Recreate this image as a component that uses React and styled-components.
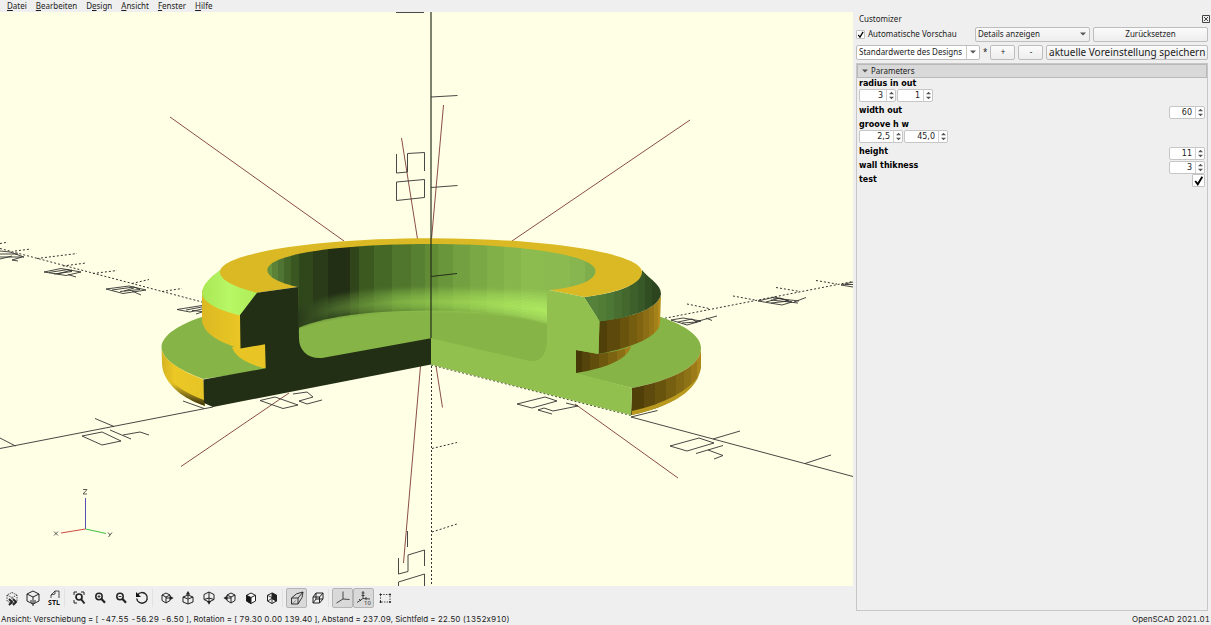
import React, { useState } from "react";
import styled, { createGlobalStyle } from "styled-components";

const GlobalStyle = createGlobalStyle`
  * {
    box-sizing: border-box;
  }
  body {
    margin: 0;
    background: #efefef;
    color: #1c1c1c;
    font-family: "Noto Sans", "DejaVu Sans", sans-serif;
    font-size: 8px;
    line-height: 10px;
  }
  button, input, select {
    font: inherit;
    color: inherit;
    margin: 0;
    padding: 0;
  }
`;
const Window = styled.div`
  display: flex;
  flex-direction: column;
  height: 100vh;
  overflow: hidden;
`;
const MenuBar = styled.nav`
  display: flex;
  align-items: center;
  gap: 9px;
  height: 12px;
  padding: 0 7px;
`;
const MenuItem = styled.button`
  border: 0;
  background: none;
  line-height: 12px;
`;
const Workspace = styled.main`
  display: flex;
  flex: 1;
  min-height: 0;
`;
const Editor = styled.section`
  display: flex;
  flex: 1;
  min-width: 0;
  flex-direction: column;
`;
const Viewport = styled.svg`
  flex: 1;
  min-height: 0;
  width: 100%;
  background: #ffffe5;
`;
const Toolbar = styled.div`
  display: flex;
  align-items: center;
  height: 26px;
  padding: 0 1px 2px;
`;
const ToolButton = styled.button`
  display: flex;
  align-items: center;
  justify-content: center;
  width: 21px;
  height: 20px;
  border: 1px solid ${(props) => (props.$checked ? "#b4b4b4" : "transparent")};
  border-radius: 2px;
  background: ${(props) => (props.$checked ? "#d9d9d9" : "transparent")};
`;
const Separator = styled.span`
  width: 4px;
  height: 18px;
  border-left: 1px solid #e2e2e2;
`;
const Dock = styled.aside`
  display: flex;
  flex: 0 0 358px;
  flex-direction: column;
  padding: 0 3px 1px;
`;
const DockTitle = styled.header`
  display: flex;
  align-items: center;
  justify-content: space-between;
  height: 13px;
  padding-left: 3px;
  margin-right: -3px;
`;
const CloseButton = styled.button`
  display: flex;
  width: 9px;
  height: 8px;
  border: 0;
  background: none;
`;
const Row = styled.div`
  display: flex;
  align-items: center;
  gap: 3px;
  height: 18px;
`;
const CheckLabel = styled.label`
  display: flex;
  flex: 1;
  align-items: center;
  gap: 3px;
  white-space: nowrap;
`;
const CheckWrap = styled.span`
  display: inline-grid;
  flex: none;
  width: ${(props) => props.$size}px;
  height: ${(props) => props.$size}px;
  > * {
    grid-area: 1 / 1;
    width: 100%;
    height: 100%;
  }
  svg {
    pointer-events: none;
  }
`;
const CheckInput = styled.input`
  appearance: none;
  border: 1px solid #c3c3c3;
  border-radius: 1px;
  background: #fff;
`;
const SelectWrap = styled.span`
  display: inline-grid;
  flex: none;
  align-items: center;
  width: ${(props) => props.$width}px;
  > * {
    grid-area: 1 / 1;
  }
`;
const Select = styled.select`
  appearance: none;
  width: 100%;
  height: 15px;
  padding-left: 2px;
  border: 1px solid #bdbdbd;
  border-radius: 2px;
  background: ${(props) => (props.$editable ? "#fff" : "linear-gradient(#f9f9f9, #ededed)")};
`;
const Arrow = styled.span`
  display: flex;
  align-items: center;
  justify-content: center;
  justify-self: end;
  width: 13px;
  height: 13px;
  margin-right: 1px;
  border-left: 1px solid ${(props) => (props.$split ? "#c9c9c9" : "transparent")};
  pointer-events: none;
`;
const PushButton = styled.button`
  flex: ${(props) => (props.$width ? "none" : 1)};
  width: ${(props) => (props.$width ? props.$width + "px" : "auto")};
  height: 15px;
  border: 1px solid #bdbdbd;
  border-radius: 2px;
  background: linear-gradient(#fbfbfb, #ededed);
  font-size: ${(props) => (props.$large ? 10 : 8)}px;
  line-height: 12px;
  white-space: nowrap;
`;
const ParamPane = styled.div`
  flex: 1;
  margin-top: 2px;
  border: 1px solid #c6c6c6;
`;
const GroupHeader = styled.button`
  display: flex;
  align-items: center;
  gap: 3px;
  width: 100%;
  height: 14px;
  padding-left: 4px;
  border: 1px solid #b9b9b9;
  background: #d9d9d9;
`;
const Params = styled.div`
  padding: 0 2px;
`;
const Param = styled.div`
  display: flex;
  flex-direction: ${(props) => (props.$vector ? "column" : "row")};
  justify-content: ${(props) => (props.$vector ? "flex-start" : "space-between")};
  height: ${(props) => (props.$vector ? 27 : 14)}px;
`;
const ParamName = styled.label`
  color: #000;
  font-family: "DejaVu Sans", sans-serif;
  font-weight: 700;
  line-height: 11px;
`;
const SpinRow = styled.div`
  display: flex;
  align-items: flex-end;
  gap: 1px;
`;
const SpinBox = styled.span`
  display: flex;
  width: ${(props) => props.$width}px;
  height: 13px;
  border: 1px solid #c6c6c6;
  border-radius: 2px;
  background: #fff;
`;
const SpinInput = styled.input`
  flex: 1;
  min-width: 0;
  padding-right: 3px;
  border: 0;
  background: none;
  font-family: "DejaVu Sans", sans-serif;
  text-align: right;
`;
const Stepper = styled.span`
  display: flex;
  align-items: center;
  justify-content: center;
  width: 9px;
  border-left: 1px solid #d2d2d2;
`;
const StatusBar = styled.footer`
  display: flex;
  align-items: center;
  justify-content: space-between;
  height: 13px;
  padding: 0 1px;
  font-family: Inter, "DejaVu Sans", sans-serif;
  font-feature-settings: "calt" 0, "tnum" 1;
`;

const cube = "M8 2.5 L13 5 V11 L8 13.7 L3 11 V5 Z M3 5 L8 7.6 L13 5 M8 7.6 V13.7";

const icons = {
  Vorschau: (
    <>
      <path d={cube} strokeDasharray="1.5 1" strokeWidth="0.8" />
      <path d="M5 9 L8 12 L5 15 M9 9 L12 12 L9 15" strokeWidth="1.9" />
    </>
  ),
  Rendern: (
    <>
      <path d="M8 1 L14 4 V11 L8 14 L2 11 V4 Z M2 4 L8 7 L14 4" />
      <path d="M8 7 V10 M5 11 H11 M6 13 H10 M7 15 H9" />
    </>
  ),
  STL: (
    <>
      <path d="M5 8 V5 L9 1 H13 V8 M5 5 L9 4 V1" strokeWidth="0.8" />
      <text x="8" y="15" textAnchor="middle" fontSize="7" fontWeight="700" fill="#111" stroke="none">STL</text>
    </>
  ),
  "Alles anzeigen": (
    <>
      <path d="M3 5 V2 H6 M10 2 H13 V5 M3 10 V13 H6" />
      <circle cx="8" cy="7" r="3" strokeWidth="1.7" />
      <path d="M10 9 L13.5 13.5" strokeWidth="2" />
    </>
  ),
  Vergrößern: (
    <>
      <circle cx="7" cy="6.5" r="3.2" strokeWidth="1.5" />
      <path d="M5.5 6.5 H8.5 M7 5 V8" strokeWidth="0.8" />
      <path d="M9.5 9 L13 12.7" strokeWidth="2.2" />
    </>
  ),
  Verkleinern: (
    <>
      <circle cx="7" cy="6.5" r="3.2" strokeWidth="1.5" />
      <path d="M5.5 6.5 H8.5" strokeWidth="0.9" />
      <path d="M9.5 9 L13 12.7" strokeWidth="2.2" />
    </>
  ),
  Zurücksetzen: (
    <>
      <path d="M3.5 5 A5.3 5.3 0 1 1 2.7 8.5" strokeWidth="1.4" />
      <path d="M2 2 V7 H7 Z" fill="#111" stroke="none" />
    </>
  ),
  Rechts: (
    <>
      <path d="M7 3 L11 5 V10.5 L7 13 L3 10.5 V5 Z M3 5 L7 7 L11 5 M7 7 V13 M7 8 H12" />
      <path d="M11 5.7 L14.5 8 L11 10.3 Z" fill="#222" stroke="none" />
    </>
  ),
  Oben: (
    <>
      <path d="M8 5 L13 7 V12 L8 14 L3 12 V7 Z M3 7 L8 9 L13 7 M8 9 V14 M8 8 V3" />
      <path d="M5.8 4.5 L8 1 L10.2 4.5 Z" fill="#222" stroke="none" />
    </>
  ),
  Unten: (
    <>
      <path d="M8 2 L13 4.5 V9.5 L8 12 L3 9.5 V4.5 Z M8 2 V8 L3 9.5 M8 8 L13 9.5 M8 8 V13" />
      <path d="M5.8 11 L8 14.7 L10.2 11 Z" fill="#222" stroke="none" />
    </>
  ),
  Links: (
    <>
      <path d="M9 3 L13 5 V10.5 L9 13 L5 10.5 V5 Z M5 5 L9 7 L13 5 M9 7 V13 M3 8 H9" />
      <path d="M5 5.7 L1.5 8 L5 10.3 Z" fill="#222" stroke="none" />
    </>
  ),
  Vorne: (
    <>
      <path d="M8 3 L12.5 5.3 V11 L8 13.5 L3.5 11 V5.3 Z" fill="#fff" />
      <path d="M3.5 5.3 L8 7.5 V13.5 L3.5 11 Z" fill="#161616" />
      <path d="M8 7.5 L12.5 5.3" />
    </>
  ),
  Hinten: (
    <>
      <path d="M8 3 L12.5 5.3 V11 L8 13.5 L3.5 11 V5.3 Z" fill="#eee" />
      <path d="M8 3 L12.5 5.3 V11 L8 8.5 Z" fill="#222" />
      <path d="M3.5 5.3 L8 7.5 L12.5 5.3 M8 7.5 V13.5 M3.5 11 L8 8.5 L12.5 11" strokeWidth="0.8" />
    </>
  ),
  Perspektivisch: (
    <>
      <path d="M2.5 8 H9 V14 H2.5 Z M2.5 8 L7.5 3.8 L14 2 L9 8 M14 2 L13 7.5 L9 14" strokeWidth="0.9" />
      <path d="M2.5 14 L7 10.5" strokeWidth="0.4" />
    </>
  ),
  Orthogonal: <path d="M3 7 H9.5 V13 H3 Z M6 3 H13 V9 H6 Z M3 7 L6 3 M9.5 7 L13 3 M9.5 13 L13 9 M3 13 L6 9" />,
  Achsen: <path d="M8 1.5 V9 L14.5 9.5 M8 9 L1.5 13" strokeWidth="0.8" />,
  Skalenmarkierungen: (
    <>
      <path d="M7 1 V8.5 L14 9 M7 8.5 L1 12.5 M5.5 3 H8.5 M5.5 5.5 H8.5 M3 9 L5 11 M10 7 V10" strokeWidth="0.8" />
      <text x="11.5" y="15" textAnchor="middle" fontSize="6" fill="#333" stroke="none">10</text>
    </>
  ),
  Kanten: (
    <>
      <path d="M3.5 4.5 H13 V12 H3.5 Z" strokeDasharray="1.5 1.2" strokeWidth="0.8" />
      <path d="M2.5 4.5 H4.5 M3.5 3.5 V5.5 M12 4.5 H14 M13 3.5 V5.5 M2.5 12 H4.5 M3.5 11 V13 M12 12 H14 M13 11 V13" />
    </>
  ),
};

const toolGroups = [
  ["Vorschau", "Rendern", "STL"],
  ["Alles anzeigen", "Vergrößern", "Verkleinern", "Zurücksetzen"],
  ["Rechts", "Oben", "Unten", "Links", "Vorne", "Hinten"],
  ["Perspektivisch", "Orthogonal"],
  ["Achsen", "Skalenmarkierungen", "Kanten"],
];
const checkedTools = ["Perspektivisch", "Achsen", "Skalenmarkierungen"];

// [right edge, colour] of each facet
const boreFacets = [
  [272, "#68943f"], [278, "#5a8338"], [284, "#4f7433"], [291, "#436528"], [299, "#3a5722"],
  [313, "#30471c"], [328, "#293b18"], [350, "#222f15"], [359, "#30451a"], [374, "#3c5a1f"],
  [392, "#456827"], [411, "#4f762c"], [425, "#588032"], [438, "#628b36"], [453, "#6a963b"],
  [470, "#73a040"], [487, "#7aa844"], [504, "#81b048"], [521, "#87b74c"], [545, "#8cbc4f"],
  [570, "#8bbb50"], [585, "#87b651"], [600, "#7eae4c"],
];
const chamferFacets = [
  [598, "#55823b"], [606, "#517d37"], [614, "#4d7734"], [622, "#486f31"], [630, "#43682d"],
  [638, "#3d602a"], [645, "#385827"], [652, "#314e22"], [662, "#2c451e"],
];
const rimFacets = [
  [607, "#4f3f09"], [620, "#5c490b"], [629, "#6a530d"], [637, "#755d10"], [643, "#806412"],
  [649, "#8a6d14"], [654, "#967616"], [658, "#a58119"], [664, "#b58d1c"],
];
const neckFacets = [
  [582, "#473807"], [590, "#54430a"], [599, "#614d0c"], [608, "#6e580e"], [617, "#7b6311"],
  [625, "#8b6f15"], [634, "#a27e18"],
];
const flangeFacets = [
  [644, "#513f0a"], [655, "#5d4a0c"], [666, "#69540e"], [676, "#765f11"], [684, "#836913"],
  [691, "#8e7216"], [697, "#9c7b18"], [703, "#ad881b"],
];

function Facets({ from, facets, top, height, clip }) {
  return (
    <g clipPath={`url(#${clip})`}>
      {facets.map(([to, fill], i) => {
        const x = i ? facets[i - 1][0] : from;
        return <rect key={to} x={x} y={top} width={to - x + 0.5} height={height} fill={fill} />;
      })}
    </g>
  );
}

const filletSteps = Array.from({ length: 20 }, (_, i) => i / 19);

function Fillet() {
  return filletSteps.map((t) => {
    const left = 305 + 22 * t;
    const mid = 286 + 25 * t;
    const right = 290 + 33 * t;
    const strength = t < 0.65 ? (t / 0.65) * 0.4 : 0.4 - (t - 0.65) * 0.8;
    return (
      <path
        key={t}
        d={`M298 ${left} C330 ${mid + 4} 385 ${mid} 431 ${mid} C480 ${mid} 520 ${mid + 3} 549 ${right}`}
        stroke="url(#filletTone)"
        strokeWidth="4"
        opacity={strength}
        fill="none"
      />
    );
  });
}

function Model() {
  return (
    <g>
      <path d="M203 379 C177 369 162 359 161.500 347 C162 335 180 324 202 317 L661 317 C687 326 701 337 701 348 C701 366 673 380 632 388 L576 374 L431 340 L266 370 Z" fill="#86b447" />
      <path d="M161.500 347 C162 359 177 369 203.500 379.500 L205 406 C180 397 162 381 162 363 Z" fill="url(#flangeYellow)" />
      <path d="M165 373 C172 384 187 394 204 400 L205 406 C188 400 170 390 165 373 Z" fill="url(#underside)" />
      <Facets from={630} facets={flangeFacets} top={340} height={80} clip="flangeClip" />
      <path d="M632 411 C665 404 691 389 699 375 C692 394 668 407 632 415 Z" fill="#b99a1e" />
      <path d="M232 347 L266 343 V369 C248 364 235 357 232 347 Z" fill="#e8c524" />
      <path d="M202 290 V321 C204 333 216 341 241 349 V314 Z" fill="url(#rimYellow)" />
      <path d="M220 270 C211 277 202 284 202 294 C204 303 218 310 240 315.500 L258 292 Z" fill="url(#chamferLight)" />
      <Facets from={574} facets={neckFacets} top={340} height={40} clip="neckClip" />
      <Facets from={597} facets={rimFacets} top={290} height={70} clip="rimClip" />
      <Facets from={582} facets={chamferFacets} top={268} height={58} clip="chamferClip" />
      <path d="M257 292.700 C238 288 220 281 220 272 C220 253.400 314.500 238.300 431 238.300 C547.500 238.300 642 253.400 642 272 C642 284 618 293 584 297 L549 290 L400 280 L298 287 Z" fill="#dbb924" />

      <Facets from={266} facets={boreFacets} top={240} height={90} clip="boreClip" />
      <g clipPath="url(#pocketClip)">
        <path d="M298 328 C330 314 385 310.500 431 310.500 C480 310.500 520 315 548 324 V365 H298 Z" fill="#86b447" />
        <Fillet />
      </g>
      <path d="M203.500 379.500 L204 403 L213 407 L431 364.500 V338.300 L322 358 C307 359 299 350 299 338 L298 287 L257 292.700 L240 315 L240.500 348.500 L265 344.300 L265.700 368.300 Z" fill="#222f15" />
      <path d="M431 338.300 V364.500 L631 415 L632 388 L576 373 V350 L598.500 354 L599.500 321 L584 297 L549 290 L547 291 V338 C547 353 542 362 530 361 Z" fill="#91c04e" />
    </g>
  );
}

const solidLines = [
  "M0 448.500 L213 407", "M0 438 L15.500 446", "M95 418.500 L114 426.500", "M183 401 L204 408.500",
  "M631 417 L853 476.500", "M631 417 L657.500 410.500", "M713 439 L740 431", "M805 463.500 L831 455",
  "M431 97 L457.500 95.500", "M431 187.500 L457.500 185.500", "M396 12.500 H424",
  "M82 436 L102 432 L121 441 L102 445 Z", "M110 430 L131 439 M123 435 L140 432 L149 435",
  "M260 400.500 L275 397 L298 405 L283 408.500 Z", "M293 394 L307 392 L313 397 L299 401 L307 404 L322 400",
  "M517 404 L545 397 L557 401 L532 408 Z", "M552 414 L538 410 L544 408 L553 411 L578 406 L566 403",
  "M670 446 L699 438 L714 443 L687 451 Z", "M696 453.500 L723 445.500 M708 450 L723 455.500 L714 459",
  "M396.500 154 V173 L407.500 172 V153.500 L424.500 152.500 V171", "M396.500 182 L424.500 179.500 V197.500 L396.500 200.500 Z",
  "M407.500 531 V547", "M398.500 558 V574 L408 571.500 V555 L424.500 550 V566", "M398.500 586 V582 L424.500 574 V586",
  // negative axis labels
  "M0 251 L10 252 L24 257 L0 257 M0 254 L18 254 M0 259 L12 256 M12 260 L22 257 M12 260 L18 261",
  "M44 272 L61 268.500 L81 272 L66 275.500 Z M49 272.500 L68 269.500 L72 271.500 L54 274 M57 274 L72 270 M68 274.500 L76 277",
  "M106 289 L129 286 L146 290 L123 293.500 Z M112 290 L134 287 L140 289.500 L120 291.500 M124 291 L134 288 M132 291 L141 295",
  "M177 309.500 L202 305.500 M177 309.500 L190 312 L202 309 M186 310 L202 307 M192 310.500 L202 311.500 M196 314 L202 312",
  "M671 320 L683 318 L701 321 L687 325 Z M678 322 L692 319 L697 322 L682 323 M695 322 L717 316 M706 318 L712 320.500",
  "M758 301 L775 297 L792 302 L782 305 Z M766 302 L780 298 L789 301 L771 303 M771 300 L798 303 M773 298 L799 301 M794 302 L806 297.500",
  "M841 285 L853 282 M841 285 L853 287 M845 284.500 H853",
];
const dottedLines = [
  "M0 248.500 L202 302", "M0 243.500 L6 242.500", "M15 251 L31 249", "M37 258.500 L77 253.500",
  "M63 266 L86 263", "M93 273.500 L117 270.500", "M132 283.500 L149 279.500", "M162 291.500 L182 288.500",
  "M661 319 L853 281.500", "M687 304 L709 308.500", "M733 296 L755 300", "M776 287.500 L800 291.500", "M816 280.500 L837 284",
  "M432 448.500 L457 442.500", "M432 532 L457 524",
];
const guideLines = [
  "M170 117 L344 241", "M690 120 L512 241", "M401.500 138 L417.500 239", "M443.500 105 L431.500 239",
  "M181 466.500 L289 393", "M678 478 L575 404", "M420.500 366 L403.500 563", "M436 366 L442.500 407.500",
];

function Scene() {
  return (
    <Viewport viewBox="0 12 853 574" preserveAspectRatio="xMidYMid slice" role="img" aria-label="3D-Ansicht">
      <defs>
        <linearGradient id="flangeYellow">
          <stop offset="0" stopColor="#d5b322" />
          <stop offset="0.3" stopColor="#ebc824" />
          <stop offset="1" stopColor="#e6c426" />
        </linearGradient>
        <linearGradient id="rimYellow">
          <stop offset="0" stopColor="#dcb922" />
          <stop offset="1" stopColor="#eac725" />
        </linearGradient>
        <linearGradient id="chamferLight">
          <stop offset="0" stopColor="#a9e755" />
          <stop offset="0.5" stopColor="#b8f765" />
          <stop offset="1" stopColor="#aeed58" />
        </linearGradient>
        <linearGradient id="underside" x1="0.5" y1="0.4" x2="0.4" y2="0.9">
          <stop offset="0" stopColor="#e0be24" />
          <stop offset="1" stopColor="#30290c" />
        </linearGradient>
        <linearGradient id="filletTone" gradientUnits="userSpaceOnUse" x1="298" y1="0" x2="548" y2="0">
          <stop offset="0" stopColor="#263719" />
          <stop offset="0.15" stopColor="#527630" />
          <stop offset="0.4" stopColor="#8bc04a" />
          <stop offset="0.7" stopColor="#a5df57" />
          <stop offset="1" stopColor="#bcfb67" />
        </linearGradient>
        <clipPath id="boreClip">
          <path d="M298 287 C280 283 267.300 277 267.300 270 C267.300 254 340 244 431 244 C520 244 595.500 255 595.500 271 C595.500 280 580 287 549 290 L547 330 H298 Z" />
        </clipPath>
        <clipPath id="pocketClip">
          <path d="M298 270 H547 V338 C547 353 542 362 530 361 L431 338.300 L322 358 C307 359 299 350 299 338 Z" />
        </clipPath>
        <clipPath id="chamferClip">
          <path d="M642 270 C650 280 661 284 661 294 C659 307 636 317 599.500 321.500 L584 297 C618 293 641 285 642 270 Z" />
        </clipPath>
        <clipPath id="rimClip">
          <path d="M599.500 321 C636 317 659 307 661 294 L660 324 C657 337 635 347 598.500 354 Z" />
        </clipPath>
        <clipPath id="neckClip">
          <path d="M576 350 L598.500 354 C612 352 623 350 631 346 C628 359 607 368 576 373 Z" />
        </clipPath>
        <clipPath id="flangeClip">
          <path d="M632 388 C673 380 701 366 701 348 V368 C697 390 671 407 631 415 Z" />
        </clipPath>
      </defs>
      <path d={dottedLines.join(" ")} fill="none" stroke="#333" strokeWidth="1" strokeDasharray="2 2" />
      <path d={guideLines.join(" ")} fill="none" stroke="#7c3a34" strokeWidth="0.9" />
      <path d={solidLines.join(" ")} fill="none" stroke="#333" strokeWidth="0.9" />
      <Model />
      <path d="M431 365 L631 415.500" stroke="#4a5b2c" strokeDasharray="2 2" />
      <path d="M431 12 V338 M431 276.500 L457 273.500" fill="none" stroke="#26301b" strokeWidth="1.200" />
      <path d="M431.500 366 V586" stroke="#333" strokeDasharray="2 2" />
      <path d="M85.500 529 V498" stroke="#5550b8" />
      <path d="M85.500 529 L61 533" stroke="#d04a42" />
      <path d="M85.500 529 L106 533.500" stroke="#3dc044" />
      <path d="M83 489.500 H87 L83 494 H87 M54 531.500 L58 535.500 M58 531.500 L54 535.500 M108 532.500 L110 535 M112 532.500 L108.500 537" fill="none" stroke="#333" strokeWidth="0.8" />
    </Viewport>
  );
}

function CheckBox({ id, size, ...rest }) {
  const [on, setOn] = useState(true);
  return (
    <CheckWrap $size={size}>
      <CheckInput id={id} type="checkbox" checked={on} onChange={() => setOn(!on)} {...rest} />
      {on && (
        <svg viewBox="0 0 12 12">
          <path d="M3 6.500 L5.300 9.500 L9.500 2.500" fill="none" stroke="#000" strokeWidth="1.700" />
        </svg>
      )}
    </CheckWrap>
  );
}

function Spin({ id, value, width, label }) {
  return (
    <SpinBox $width={width}>
      <SpinInput id={id} aria-label={label} defaultValue={value} />
      <Stepper>
        <svg width="7" height="9" viewBox="0 0 7 9">
          <path d="M1 3.200 L3.500 0.700 L6 3.200 Z M1 5.800 L3.500 8.300 L6 5.800 Z" fill="#555" />
        </svg>
      </Stepper>
    </SpinBox>
  );
}

function DownArrow() {
  return (
    <svg width="6" height="4" viewBox="0 0 6 4">
      <path d="M0 0.500 H6 L3 3.500 Z" fill="#555" />
    </svg>
  );
}

const params = [
  { name: "radius in out", values: ["3", "1"], widths: [37, 36] },
  { name: "width out", values: ["60"], widths: [36] },
  { name: "groove h w", values: ["2,5", "45,0"], widths: [44, 44] },
  { name: "height", values: ["11"], widths: [36] },
  { name: "wall thikness", values: ["3"], widths: [36] },
];

function Customizer() {
  return (
    <Dock>
      <DockTitle>
        Customizer
        <CloseButton aria-label="Schließen">
          <svg width="8" height="8" viewBox="0 0 8 8">
            <path d="M0.500 0.500 H7.500 V7.500 H0.500 Z M2 2 L6 6 M6 2 L2 6" fill="none" stroke="#444" />
          </svg>
        </CloseButton>
      </DockTitle>
      <Row>
        <CheckLabel htmlFor="auto">
          <CheckBox id="auto" size={9} />
          Automatische Vorschau
        </CheckLabel>
        <SelectWrap $width={115}>
          <Select aria-label="Details">
            <option>Details anzeigen</option>
          </Select>
          <Arrow>
            <DownArrow />
          </Arrow>
        </SelectWrap>
        <PushButton $width={115}>Zurücksetzen</PushButton>
      </Row>
      <Row>
        <SelectWrap $width={124}>
          <Select $editable aria-label="Voreinstellung">
            <option>Standardwerte des Designs</option>
          </Select>
          <Arrow $split>
            <DownArrow />
          </Arrow>
        </SelectWrap>
        <span>*</span>
        <PushButton $width={25}>+</PushButton>
        <PushButton $width={25}>-</PushButton>
        <PushButton $large>aktuelle Voreinstellung speichern</PushButton>
      </Row>
      <ParamPane>
        <GroupHeader>
          <DownArrow />
          Parameters
        </GroupHeader>
        <Params>
          {params.map(({ name, values, widths }) => (
            <Param key={name} $vector={values.length > 1}>
              <ParamName htmlFor={name}>{name}</ParamName>
              <SpinRow>
                {values.map((value, i) => (
                  <Spin
                    key={i}
                    id={i ? undefined : name}
                    label={i ? `${name} ${i + 1}` : undefined}
                    value={value}
                    width={widths[i]}
                  />
                ))}
              </SpinRow>
            </Param>
          ))}
          <Param>
            <ParamName htmlFor="test">test</ParamName>
            <CheckBox id="test" size={13} />
          </Param>
        </Params>
      </ParamPane>
    </Dock>
  );
}

// [before, mnemonic, after]
const menus = [
  ["", "D", "atei"],
  ["", "B", "earbeiten"],
  ["D", "e", "sign"],
  ["", "A", "nsicht"],
  ["", "F", "enster"],
  ["", "H", "ilfe"],
];

function App() {
  return (
    <Window>
      <GlobalStyle />
      <MenuBar>
        {menus.map(([before, key, after]) => (
          <MenuItem key={key}>
            {before}
            <u>{key}</u>
            {after}
          </MenuItem>
        ))}
      </MenuBar>
      <Workspace>
        <Editor>
          <Scene />
          <Toolbar>
            {toolGroups.map((group, i) => (
              <React.Fragment key={i}>
                {i > 0 && <Separator />}
                {group.map((name) => (
                  <ToolButton key={name} aria-label={name} $checked={checkedTools.includes(name)}>
                    <svg width="16" height="16" viewBox="0 0 16 16" fill="none" stroke="#222">
                      {icons[name]}
                    </svg>
                  </ToolButton>
                ))}
              </React.Fragment>
            ))}
          </Toolbar>
        </Editor>
        <Customizer />
      </Workspace>
      <StatusBar>
        <span>
          Ansicht: Verschiebung = [ -47.55 -56.29 -6.50 ], Rotation = [ 79.30 0.00 139.40 ], Abstand = 237.09, Sichtfeld = 22.50 (1352x910)
        </span>
        <span>OpenSCAD 2021.01</span>
      </StatusBar>
    </Window>
  );
}

export default App;
